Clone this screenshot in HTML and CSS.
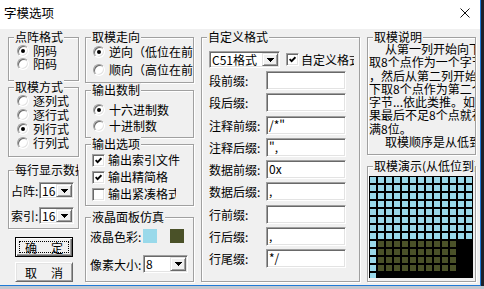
FILE: index.html
```html
<!DOCTYPE html>
<html lang="zh-CN">

<head>
    <meta charset="UTF-8">
    <meta name="viewport" content="width=device-width, initial-scale=1.0">
    <title>字模选项</title>
    <link rel="stylesheet" href="styles.css">
</head>

<body>

    <div id="screen">
        <div id="dialog">
            <div id="titlebar">
                <span id="title">字模选项</span>
                <svg id="close" width="10" height="10" viewBox="0 0 10 10">
                    <path d="M0.5 0.5L9.5 9.5M9.5 0.5L0.5 9.5" stroke="#111" stroke-width="1" fill="none" />
                </svg>
            </div>

            <div id="dialog-body">
                <!-- left column -->
                <div class="column" id="col-left">
                    <div class="group" id="dot-format">
                        <span class="legend">点阵格式</span>
                        <div class="option"><span class="radio checked"></span>阴码</div>
                        <div class="option"><span class="radio"></span>阳码</div>
                    </div>

                    <div class="group" id="scan-mode">
                        <span class="legend">取模方式</span>
                        <div class="option"><span class="radio"></span>逐列式</div>
                        <div class="option"><span class="radio"></span>逐行式</div>
                        <div class="option"><span class="radio checked"></span>列行式</div>
                        <div class="option"><span class="radio"></span>行列式</div>
                    </div>

                    <div class="group" id="per-line">
                        <span class="legend clip">每行显示数据</span>
                        <div class="combo-row">
                            <span class="combo-label">占阵:</span>
                            <div class="combo small">
                                <span class="combo-text">16</span>
                                <span class="combo-btn"><svg width="7" height="4" viewBox="0 0 7 4"><path d="M0 0h7v1h-1v1h-1v1h-1v1h-1v-1h-1v-1h-1v-1h-1z" /></svg></span>
                            </div>
                        </div>
                        <div class="combo-row">
                            <span class="combo-label">索引:</span>
                            <div class="combo small">
                                <span class="combo-text">16</span>
                                <span class="combo-btn"><svg width="7" height="4" viewBox="0 0 7 4"><path d="M0 0h7v1h-1v1h-1v1h-1v1h-1v-1h-1v-1h-1v-1h-1z" /></svg></span>
                            </div>
                        </div>
                    </div>

                    <button class="dlg-button default"><span>确</span><span>定</span></button>
                    <button class="dlg-button"><span>取</span><span>消</span></button>
                </div>

                <!-- middle column -->
                <div class="column" id="col-mid">
                    <div class="group" id="direction">
                        <span class="legend">取模走向</span>
                        <div class="option"><span class="radio checked"></span>逆向（低位在前）</div>
                        <div class="option"><span class="radio"></span>顺向（高位在前）</div>
                    </div>

                    <div class="group" id="radix">
                        <span class="legend">输出数制</span>
                        <div class="option"><span class="radio checked"></span>十六进制数</div>
                        <div class="option"><span class="radio"></span>十进制数</div>
                    </div>

                    <div class="group" id="output">
                        <span class="legend">输出选项</span>
                        <div class="option"><span class="check"><svg width="7" height="7" viewBox="0 0 7 7"><path d="M0.6 3.1L2.6 5.2L6.4 1.2" stroke="#000" stroke-width="1.8" fill="none" /></svg></span>输出索引文件</div>
                        <div class="option"><span class="check"><svg width="7" height="7" viewBox="0 0 7 7"><path d="M0.6 3.1L2.6 5.2L6.4 1.2" stroke="#000" stroke-width="1.8" fill="none" /></svg></span><span class="option-text short">输出精简格式</span></div>
                        <div class="option"><span class="check"></span><span class="option-text mid">输出紧凑格式</span></div>
                    </div>

                    <div class="group" id="lcd">
                        <span class="legend">液晶面板仿真</span>
                        <div class="lcd-row">
                            <span class="lcd-label">液晶色彩:</span>
                            <span class="swatch lit"></span>
                            <span class="swatch ink"></span>
                        </div>
                        <div class="lcd-row size-row">
                            <span class="lcd-label">像素大小:</span>
                            <div class="combo pixel">
                                <span class="combo-text">8</span>
                                <span class="combo-btn"><svg width="7" height="4" viewBox="0 0 7 4"><path d="M0 0h7v1h-1v1h-1v1h-1v1h-1v-1h-1v-1h-1v-1h-1z" /></svg></span>
                            </div>
                        </div>
                    </div>
                </div>

                <!-- custom format -->
                <div class="group" id="custom">
                    <span class="legend">自定义格式</span>
                    <div class="custom-head">
                        <div class="combo format">
                            <span class="combo-text">C51格式</span>
                            <span class="combo-btn"><svg width="7" height="4" viewBox="0 0 7 4"><path d="M0 0h7v1h-1v1h-1v1h-1v1h-1v-1h-1v-1h-1v-1h-1z" /></svg></span>
                        </div>
                        <div class="option custom-check"><span class="check"><svg width="7" height="7" viewBox="0 0 7 7"><path d="M0.6 3.1L2.6 5.2L6.4 1.2" stroke="#000" stroke-width="1.8" fill="none" /></svg></span>自定义格式</div>
                    </div>
                    <div class="fields">
                        <div class="field-row"><span class="field-label">段前缀:</span><span class="field"></span></div>
                        <div class="field-row"><span class="field-label">段后缀:</span><span class="field"></span></div>
                        <div class="field-row"><span class="field-label">注释前缀:</span><span class="field">/*"</span></div>
                        <div class="field-row"><span class="field-label">注释后缀:</span><span class="field">",</span></div>
                        <div class="field-row"><span class="field-label">数据前缀:</span><span class="field">0x</span></div>
                        <div class="field-row"><span class="field-label">数据后缀:</span><span class="field">,</span></div>
                        <div class="field-row"><span class="field-label">行前缀:</span><span class="field"></span></div>
                        <div class="field-row"><span class="field-label">行后缀:</span><span class="field">,</span></div>
                        <div class="field-row"><span class="field-label">行尾缀:</span><span class="field">*/</span></div>
                    </div>
                </div>

                <!-- right column -->
                <div class="column" id="col-right">
                    <div class="group" id="note-box">
                        <span class="legend">取模说明</span>
                        <div class="note">
                            <div class="note-line indent">从第一列开始向下</div>
                            <div class="note-line">取8个点作为一个字节</div>
                            <div class="note-line">，然后从第二列开始向</div>
                            <div class="note-line">下取8个点作为第二个</div>
                            <div class="note-line">字节...依此类推。如</div>
                            <div class="note-line">果最后不足8个点就补</div>
                            <div class="note-line">满8位。</div>
                            <div class="note-line indent">取模顺序是从低到高</div>
                        </div>
                    </div>

                    <div class="group" id="demo">
                        <span class="legend clip">取模演示(从低位到高位)</span>
                        <div class="matrix">
                            <div class="cells lit full"></div>
                            <div class="matrix-row">
                                <div class="cells lit first-col"></div>
                                <div class="cells ink block"></div>
                            </div>
                        </div>
                    </div>
                </div>
            </div>
        </div>
        <div id="desk-strip"></div>
    </div>

</body>

</html>
```

FILE: styles.css
```css
* {
    box-sizing: border-box;
}

body {
    margin: 0;
    font-family: "Noto Sans CJK SC", "Noto Sans", sans-serif;
    font-size: 12px;
    color: #000;
}

#screen {
    width: 484px;
    height: 289px;
    background: #1c222b;
    overflow: hidden;
}

#dialog {
    width: 481px;
    height: 286px;
    background: #f0f0f0;
    border-right: 1px solid #1f7ad6;
    border-bottom: 1px solid #1f7ad6;
}

#desk-strip {
    height: 3px;
    background: #c3c8d0;
}

/* title bar */
#titlebar {
    height: 29px;
    background: #fff;
    display: flex;
    justify-content: space-between;
    align-items: flex-start;
    padding: 6px 10px 0 4px;
}

#title {
    line-height: 14px;
    font-size: 12.5px;
}

#close {
    margin-top: 2px;
}

#dialog-body {
    display: flex;
    align-items: flex-start;
    padding: 8px 0 0 8px;
}

.column {
    display: flex;
    flex-direction: column;
    align-items: flex-start;
}

#col-left {
    width: 71px;
    margin-right: 6px;
}

#col-mid {
    width: 109px;
    margin-right: 7px;
}

#col-right {
    width: 109px;
}

/* etched group box */
.group {
    position: relative;
    width: 100%;
    border: 1px solid #a0a0a0;
    box-shadow: inset 1px 1px 0 #fff, 1px 1px 0 #fff;
}

.legend {
    position: absolute;
    top: -8px;
    left: 5px;
    padding: 0 1px;
    line-height: 14px;
    background: #f0f0f0;
    white-space: nowrap;
}

.legend.clip {
    right: 0;
    overflow: hidden;
}

/* radios and checkboxes */
.option {
    display: flex;
    align-items: center;
    gap: 4px;
    height: 14px;
    line-height: 14px;
    white-space: nowrap;
    overflow: hidden;
}

.radio {
    flex: none;
    width: 12px;
    height: 12px;
    border-radius: 50%;
    background: #fff;
    border: 1px solid;
    border-color: #a0a0a0 #fff #fff #a0a0a0;
    box-shadow: inset 1px 1px 0 #696969, inset -1px -1px 0 #e3e3e3;
    display: flex;
    align-items: center;
    justify-content: center;
}

.radio.checked::after {
    content: "";
    width: 4px;
    height: 4px;
    border-radius: 50%;
    background: #000;
}

.check {
    flex: none;
    width: 13px;
    height: 13px;
    margin-right: -1px;
    background: #fff;
    border: 1px solid;
    border-color: #a0a0a0 #fff #fff #a0a0a0;
    box-shadow: inset 1px 1px 0 #696969, inset -1px -1px 0 #e3e3e3;
    display: flex;
    align-items: center;
    justify-content: center;
}

.option-text {
    overflow: hidden;
}

.option-text.short {
    width: 60px;
}

.option-text.mid {
    width: 68px;
}

/* left column groups */
#dot-format {
    height: 44px;
    padding: 6px 0 0 8px;
}

#dot-format .option {
    height: 13px;
}

#scan-mode {
    height: 70px;
    margin-top: 6px;
    padding: 6px 0 0 8px;
}

#per-line {
    height: 59px;
    margin-top: 13px;
    padding: 11px 0 0 2px;
    display: flex;
    flex-direction: column;
    gap: 8px;
}

.combo-row {
    display: flex;
    align-items: center;
}

.combo-label {
    width: 28px;
    white-space: nowrap;
}

/* combo box */
.combo {
    display: flex;
    height: 17px;
    padding: 1px;
    background: #fff;
    border: 1px solid;
    border-color: #a0a0a0 #fff #fff #a0a0a0;
    box-shadow: inset 1px 1px 0 #696969, inset -1px -1px 0 #e3e3e3;
}

.combo-text {
    flex: 1;
    padding-left: 1px;
    line-height: 13px;
    white-space: nowrap;
    overflow: hidden;
}

.combo-btn {
    flex: none;
    width: 16px;
    background: #f0f0f0;
    border: 1px solid;
    border-color: #e3e3e3 #696969 #696969 #e3e3e3;
    box-shadow: inset 1px 1px 0 #fff, inset -1px -1px 0 #a0a0a0;
    display: flex;
    align-items: center;
    justify-content: center;
}

.combo.small {
    width: 35px;
}

.combo.pixel {
    width: 45px;
    height: 18px;
}

.combo.format {
    width: 71px;
}

/* push buttons */
.dlg-button {
    width: 58px;
    height: 20px;
    margin-left: 7px;
    padding: 0 9px;
    font: inherit;
    color: #000;
    background: #f0f0f0;
    border: 1px solid;
    border-color: #fff #696969 #696969 #fff;
    box-shadow: inset 1px 1px 0 #e3e3e3, inset -1px -1px 0 #a0a0a0;
    display: flex;
    justify-content: space-between;
    align-items: center;
}

.dlg-button.default {
    margin-top: 8px;
    border: 1px solid #000;
    box-shadow: inset 1px 1px 0 #fff, inset -1px -1px 0 #696969, inset -2px -2px 0 #a0a0a0;
    outline: 1px dotted #000;
    outline-offset: -5px;
}

.dlg-button + .dlg-button {
    margin-top: 5px;
}

/* middle column groups */
#direction {
    height: 46px;
    padding: 7px 0 0 7px;
    display: flex;
    flex-direction: column;
    gap: 4px;
}

#radix {
    height: 48px;
    margin-top: 7px;
    padding: 12px 0 0 7px;
    display: flex;
    flex-direction: column;
    gap: 2px;
}

#output {
    height: 62px;
    margin-top: 6px;
    padding: 8px 0 0 6px;
    display: flex;
    flex-direction: column;
    gap: 3px;
}

#output .option {
    gap: 4px;
}

#lcd {
    height: 65px;
    margin-top: 11px;
    padding: 11px 0 0 4px;
}

.lcd-row {
    display: flex;
    align-items: center;
    height: 14px;
}

.lcd-row.size-row {
    height: 18px;
    margin-top: 12px;
}

.lcd-label {
    width: 53px;
    white-space: nowrap;
}

.swatch {
    width: 14px;
    height: 14px;
}

.swatch + .swatch {
    margin-left: 13px;
}

.lit {
    background-color: #99d9ea;
}

.ink {
    background-color: #4a5128;
}

/* custom format group */
#custom {
    width: 159px;
    height: 245px;
    margin-right: 7px;
    padding: 13px 0 0 7px;
}

.custom-head {
    display: flex;
    align-items: center;
    height: 17px;
}

.custom-check {
    width: 68px;
    margin-left: 6px;
    gap: 3px;
}

.fields {
    margin-top: 3px;
    display: flex;
    flex-direction: column;
    gap: 3.25px;
}

.field-row {
    display: flex;
    align-items: center;
    height: 19px;
}

.field-label {
    width: 57px;
    white-space: nowrap;
}

.field {
    width: 80px;
    height: 19px;
    padding: 0 2px;
    line-height: 16px;
    background: #fff;
    border: 1px solid;
    border-color: #a0a0a0 #fff #fff #a0a0a0;
    box-shadow: inset 1px 1px 0 #696969, inset -1px -1px 0 #e3e3e3;
    white-space: pre;
}

/* right column */
#note-box {
    height: 118px;
    padding: 4px 0 0 1px;
}

.note {
    line-height: 13.3px;
    overflow: hidden;
}

.note-line {
    white-space: pre;
}

.note-line.indent {
    padding-left: 16px;
}

#demo {
    height: 116px;
    margin-top: 11px;
    padding: 9px 0 0 1px;
}

.matrix {
    width: 104px;
    height: 102px;
    padding: 1px 0 0 1px;
    background: #000;
    overflow: hidden;
}

.cells {
    background-image:
        repeating-linear-gradient(90deg, transparent 0 6px, #000 6px 8px),
        repeating-linear-gradient(180deg, transparent 0 6px, #000 6px 8px);
}

.cells.full {
    width: 103px;
    height: 64px;
}

.matrix-row {
    display: flex;
}

.cells.first-col {
    width: 8px;
    height: 40px;
}

.cells.block {
    width: 80px;
    height: 32px;
}
```
